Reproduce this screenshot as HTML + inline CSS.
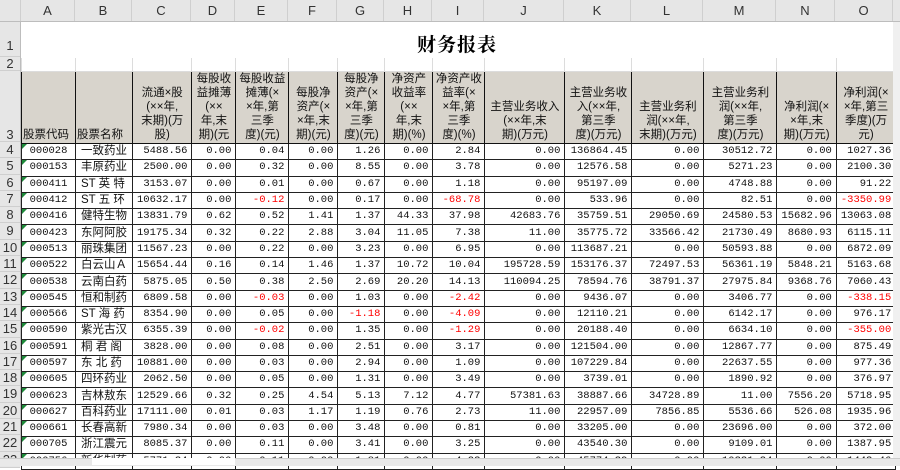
<!DOCTYPE html>
<html><head><meta charset="utf-8"><style>
body{margin:0;width:900px;height:465px;overflow:hidden;background:#fff;position:relative;font-family:"Liberation Sans","Noto Sans CJK SC",sans-serif}
#hdr{position:absolute;left:0;top:0;width:900px;height:22px;background:#e6e6e6;border-bottom:1px solid #bdbdbd;box-sizing:border-box}
.ch{position:absolute;top:0;height:21px;line-height:22px;text-align:center;font-size:13px;color:#333;border-right:1px solid #cfcfcf;box-sizing:border-box}
#rh{position:absolute;left:0;top:22px;width:21px;height:440px;background:#e6e6e6;border-right:1px solid #bdbdbd;box-sizing:border-box}
.rn{position:absolute;left:0;width:20px;text-align:center;font-size:13px;color:#333;border-bottom:1px solid #cfcfcf;box-sizing:border-box}
table{position:absolute;left:21px;top:22px;border-collapse:collapse;table-layout:fixed}
td{padding:0 4px;overflow:hidden;white-space:nowrap;font-family:"Liberation Mono","Noto Sans CJK SC",monospace;font-size:10.5px;color:#111;text-align:right;border:1px solid #222;box-sizing:border-box}
tr.g td{border:1px solid #dcdcdc}
tr.h td{background:#d8d4cc;vertical-align:bottom;text-align:center;white-space:normal;font-family:"Liberation Sans","Noto Sans CJK SC",sans-serif;font-size:11.5px;line-height:14px;padding:0 1px 1px;border:1.5px solid #111}
tr.d td{height:16.3px;line-height:15px}
td.a{text-align:center;position:relative}
td.a:before{content:"";position:absolute;left:0;top:0;border-top:5px solid #1e8a3a;border-right:5px solid transparent}
td.b{text-align:left;font-family:"Liberation Sans","Noto Sans CJK SC",sans-serif;font-size:11.5px;padding-left:5px}
.r{color:#f00}
#title{position:absolute;left:21px;top:30px;width:872px;text-align:center;font-family:"Liberation Serif","Noto Serif CJK SC",serif;font-weight:bold;font-size:19px;letter-spacing:1px}
#tabs{position:absolute;left:0;top:458px;width:900px;height:7px;background:#e9e9e9;border-top:1px solid #ccc}
#tab{position:absolute;left:92px;top:458px;width:143px;height:7px;background:#fff}
#side{position:absolute;left:893px;top:22px;width:7px;height:436px;background:#f0f0f0}
</style></head><body>
<div id="hdr">
<div class="ch" style="left:0;width:21px"></div>
<div class="ch" style="left:21px;width:54px">A</div><div class="ch" style="left:75px;width:57px">B</div><div class="ch" style="left:132px;width:59px">C</div><div class="ch" style="left:191px;width:44px">D</div><div class="ch" style="left:235px;width:53px">E</div><div class="ch" style="left:288px;width:49px">F</div><div class="ch" style="left:337px;width:47px">G</div><div class="ch" style="left:384px;width:48px">H</div><div class="ch" style="left:432px;width:52px">I</div><div class="ch" style="left:484px;width:80px">J</div><div class="ch" style="left:564px;width:67px">K</div><div class="ch" style="left:631px;width:72px">L</div><div class="ch" style="left:703px;width:73px">M</div><div class="ch" style="left:776px;width:59px">N</div><div class="ch" style="left:835px;width:58px">O</div>
</div>
<div id="rh">
<div class="rn" style="top:0;height:35px;line-height:48px">1</div>
<div class="rn" style="top:35px;height:14px;line-height:14px">2</div>
<div class="rn" style="top:49px;height:71px;line-height:128px">3</div>
</div>
<table>
<colgroup><col style="width:54px"><col style="width:57px"><col style="width:59px"><col style="width:44px"><col style="width:53px"><col style="width:49px"><col style="width:47px"><col style="width:48px"><col style="width:52px"><col style="width:80px"><col style="width:67px"><col style="width:72px"><col style="width:73px"><col style="width:59px"><col style="width:58px"></colgroup>
<tr class="g" style="height:35px"><td colspan="15" style="border-color:#fff"></td></tr>
<tr class="g" style="height:14px"><td></td><td></td><td></td><td></td><td></td><td></td><td></td><td></td><td></td><td></td><td></td><td></td><td></td><td></td><td></td></tr>
<tr class="h" style="height:71px"><td style="text-align:left">股票代码</td><td style="text-align:left">股票名称</td><td>流通×股<br>(××年,<br>末期)(万<br>股)</td><td>每股收<br>益摊薄<br>(××<br>年,末<br>期)(元</td><td>每股收益<br>摊薄(×<br>×年,第<br>三季<br>度)(元)</td><td>每股净<br>资产(×<br>×年,末<br>期)(元)</td><td>每股净<br>资产(×<br>×年,第<br>三季<br>度)(元)</td><td>净资产<br>收益率<br>(××<br>年,末<br>期)(%)</td><td>净资产收<br>益率(×<br>×年,第<br>三季<br>度)(%)</td><td>主营业务收入<br>(××年,末<br>期)(万元)</td><td>主营业务收<br>入(××年,<br>第三季<br>度)(万元)</td><td>主营业务利<br>润(××年,<br>末期)(万元)</td><td>主营业务利<br>润(××年,<br>第三季<br>度)(万元)</td><td>净利润(×<br>×年,末<br>期)(万元)</td><td>净利润(×<br>×年,第三<br>季度)(万<br>元)</td></tr>
<tr class="d"><td class="a">000028</td><td class="b">一致药业</td><td>5488.56</td><td>0.00</td><td>0.04</td><td>0.00</td><td>1.26</td><td>0.00</td><td>2.84</td><td>0.00</td><td>136864.45</td><td>0.00</td><td>30512.72</td><td>0.00</td><td>1027.36</td></tr>
<tr class="d"><td class="a">000153</td><td class="b">丰原药业</td><td>2500.00</td><td>0.00</td><td>0.32</td><td>0.00</td><td>8.55</td><td>0.00</td><td>3.78</td><td>0.00</td><td>12576.58</td><td>0.00</td><td>5271.23</td><td>0.00</td><td>2100.30</td></tr>
<tr class="d"><td class="a">000411</td><td class="b">ST 英 特</td><td>3153.07</td><td>0.00</td><td>0.01</td><td>0.00</td><td>0.67</td><td>0.00</td><td>1.18</td><td>0.00</td><td>95197.09</td><td>0.00</td><td>4748.88</td><td>0.00</td><td>91.22</td></tr>
<tr class="d"><td class="a">000412</td><td class="b">ST 五 环</td><td>10632.17</td><td>0.00</td><td class="r">-0.12</td><td>0.00</td><td>0.17</td><td>0.00</td><td class="r">-68.78</td><td>0.00</td><td>533.96</td><td>0.00</td><td>82.51</td><td>0.00</td><td class="r">-3350.99</td></tr>
<tr class="d"><td class="a">000416</td><td class="b">健特生物</td><td>13831.79</td><td>0.62</td><td>0.52</td><td>1.41</td><td>1.37</td><td>44.33</td><td>37.98</td><td>42683.76</td><td>35759.51</td><td>29050.69</td><td>24580.53</td><td>15682.96</td><td>13063.08</td></tr>
<tr class="d"><td class="a">000423</td><td class="b">东阿阿胶</td><td>19175.34</td><td>0.32</td><td>0.22</td><td>2.88</td><td>3.04</td><td>11.05</td><td>7.38</td><td>11.00</td><td>35775.72</td><td>33566.42</td><td>21730.49</td><td>8680.93</td><td>6115.11</td></tr>
<tr class="d"><td class="a">000513</td><td class="b">丽珠集团</td><td>11567.23</td><td>0.00</td><td>0.22</td><td>0.00</td><td>3.23</td><td>0.00</td><td>6.95</td><td>0.00</td><td>113687.21</td><td>0.00</td><td>50593.88</td><td>0.00</td><td>6872.09</td></tr>
<tr class="d"><td class="a">000522</td><td class="b">白云山Ａ</td><td>15654.44</td><td>0.16</td><td>0.14</td><td>1.46</td><td>1.37</td><td>10.72</td><td>10.04</td><td>195728.59</td><td>153176.37</td><td>72497.53</td><td>56361.19</td><td>5848.21</td><td>5163.68</td></tr>
<tr class="d"><td class="a">000538</td><td class="b">云南白药</td><td>5875.05</td><td>0.50</td><td>0.38</td><td>2.50</td><td>2.69</td><td>20.20</td><td>14.13</td><td>110094.25</td><td>78594.76</td><td>38791.37</td><td>27975.84</td><td>9368.76</td><td>7060.43</td></tr>
<tr class="d"><td class="a">000545</td><td class="b">恒和制药</td><td>6809.58</td><td>0.00</td><td class="r">-0.03</td><td>0.00</td><td>1.03</td><td>0.00</td><td class="r">-2.42</td><td>0.00</td><td>9436.07</td><td>0.00</td><td>3406.77</td><td>0.00</td><td class="r">-338.15</td></tr>
<tr class="d"><td class="a">000566</td><td class="b">ST 海 药</td><td>8354.90</td><td>0.00</td><td>0.05</td><td>0.00</td><td class="r">-1.18</td><td>0.00</td><td class="r">-4.09</td><td>0.00</td><td>12110.21</td><td>0.00</td><td>6142.17</td><td>0.00</td><td>976.17</td></tr>
<tr class="d"><td class="a">000590</td><td class="b">紫光古汉</td><td>6355.39</td><td>0.00</td><td class="r">-0.02</td><td>0.00</td><td>1.35</td><td>0.00</td><td class="r">-1.29</td><td>0.00</td><td>20188.40</td><td>0.00</td><td>6634.10</td><td>0.00</td><td class="r">-355.00</td></tr>
<tr class="d"><td class="a">000591</td><td class="b">桐 君 阁</td><td>3828.00</td><td>0.00</td><td>0.08</td><td>0.00</td><td>2.51</td><td>0.00</td><td>3.17</td><td>0.00</td><td>121504.00</td><td>0.00</td><td>12867.77</td><td>0.00</td><td>875.49</td></tr>
<tr class="d"><td class="a">000597</td><td class="b">东 北 药</td><td>10881.00</td><td>0.00</td><td>0.03</td><td>0.00</td><td>2.94</td><td>0.00</td><td>1.09</td><td>0.00</td><td>107229.84</td><td>0.00</td><td>22637.55</td><td>0.00</td><td>977.36</td></tr>
<tr class="d"><td class="a">000605</td><td class="b">四环药业</td><td>2062.50</td><td>0.00</td><td>0.05</td><td>0.00</td><td>1.31</td><td>0.00</td><td>3.49</td><td>0.00</td><td>3739.01</td><td>0.00</td><td>1890.92</td><td>0.00</td><td>376.97</td></tr>
<tr class="d"><td class="a">000623</td><td class="b">吉林敖东</td><td>12529.66</td><td>0.32</td><td>0.25</td><td>4.54</td><td>5.13</td><td>7.12</td><td>4.77</td><td>57381.63</td><td>38887.66</td><td>34728.89</td><td>11.00</td><td>7556.20</td><td>5718.95</td></tr>
<tr class="d"><td class="a">000627</td><td class="b">百科药业</td><td>17111.00</td><td>0.01</td><td>0.03</td><td>1.17</td><td>1.19</td><td>0.76</td><td>2.73</td><td>11.00</td><td>22957.09</td><td>7856.85</td><td>5536.66</td><td>526.08</td><td>1935.96</td></tr>
<tr class="d"><td class="a">000661</td><td class="b">长春高新</td><td>7980.34</td><td>0.00</td><td>0.03</td><td>0.00</td><td>3.48</td><td>0.00</td><td>0.81</td><td>0.00</td><td>33205.00</td><td>0.00</td><td>23696.00</td><td>0.00</td><td>372.00</td></tr>
<tr class="d"><td class="a">000705</td><td class="b">浙江震元</td><td>8085.37</td><td>0.00</td><td>0.11</td><td>0.00</td><td>3.41</td><td>0.00</td><td>3.25</td><td>0.00</td><td>43540.30</td><td>0.00</td><td>9109.01</td><td>0.00</td><td>1387.95</td></tr>
<tr class="d"><td class="a">000756</td><td class="b">新华制药</td><td>5771.34</td><td>0.00</td><td>0.11</td><td>0.00</td><td>1.81</td><td>0.00</td><td>4.23</td><td>0.00</td><td>45774.39</td><td>0.00</td><td>10331.34</td><td>0.00</td><td>1443.46</td></tr>
</table>
<div id="title">财务报表</div>
<div id="side"></div>
<div style="position:absolute;left:0;top:142px;width:21px">
<div class="rn" style="position:relative;height:16.3px;line-height:16px;background:#e6e6e6">4</div><div class="rn" style="position:relative;height:16.3px;line-height:16px;background:#e6e6e6">5</div><div class="rn" style="position:relative;height:16.3px;line-height:16px;background:#e6e6e6">6</div><div class="rn" style="position:relative;height:16.3px;line-height:16px;background:#e6e6e6">7</div><div class="rn" style="position:relative;height:16.3px;line-height:16px;background:#e6e6e6">8</div><div class="rn" style="position:relative;height:16.3px;line-height:16px;background:#e6e6e6">9</div><div class="rn" style="position:relative;height:16.3px;line-height:16px;background:#e6e6e6">10</div><div class="rn" style="position:relative;height:16.3px;line-height:16px;background:#e6e6e6">11</div><div class="rn" style="position:relative;height:16.3px;line-height:16px;background:#e6e6e6">12</div><div class="rn" style="position:relative;height:16.3px;line-height:16px;background:#e6e6e6">13</div><div class="rn" style="position:relative;height:16.3px;line-height:16px;background:#e6e6e6">14</div><div class="rn" style="position:relative;height:16.3px;line-height:16px;background:#e6e6e6">15</div><div class="rn" style="position:relative;height:16.3px;line-height:16px;background:#e6e6e6">16</div><div class="rn" style="position:relative;height:16.3px;line-height:16px;background:#e6e6e6">17</div><div class="rn" style="position:relative;height:16.3px;line-height:16px;background:#e6e6e6">18</div><div class="rn" style="position:relative;height:16.3px;line-height:16px;background:#e6e6e6">19</div><div class="rn" style="position:relative;height:16.3px;line-height:16px;background:#e6e6e6">20</div><div class="rn" style="position:relative;height:16.3px;line-height:16px;background:#e6e6e6">21</div><div class="rn" style="position:relative;height:16.3px;line-height:16px;background:#e6e6e6">22</div><div class="rn" style="position:relative;height:16.3px;line-height:16px;background:#e6e6e6">23</div>
</div>
<div id="tabs"></div><div id="tab"></div>
</body></html>
